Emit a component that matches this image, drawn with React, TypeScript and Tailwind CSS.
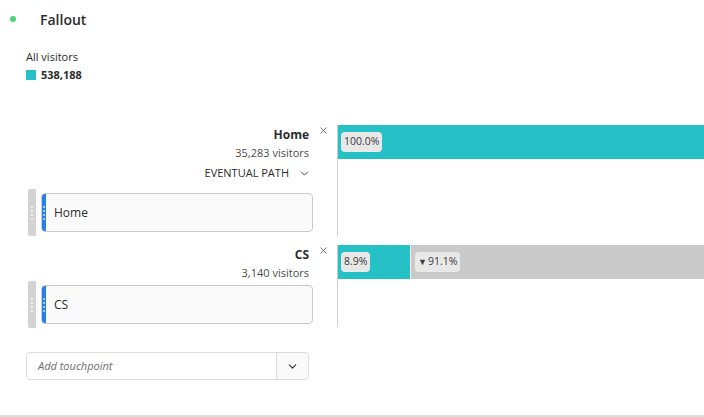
import { ChevronDown, X } from "lucide-react";

const font = { fontFamily: '"Open Sans", "Noto Sans", sans-serif' };

function Dots() {
  return (
    <div className="flex flex-col gap-[2px]">
      {[0, 1, 2, 3].map((i) => (
        <span key={i} className="block w-[2px] h-[2px] rounded-full bg-white/80" />
      ))}
    </div>
  );
}

function StepCard({ label }: { label: string }) {
  return (
    <div className="flex items-stretch">
      <div className="w-[8px] bg-[#d3d3d3] rounded-l-[2px] flex items-center justify-center -my-[4px]">
        <Dots />
      </div>
      <div className="ml-[5px] flex-1 flex h-[39px] rounded-[4px] border border-[#cacaca] bg-[#fafafa] overflow-hidden">
        <div className="w-[4px] bg-[#2680eb] flex items-center justify-center">
          <Dots />
        </div>
        <span className="pl-[8px] self-center text-[12px] text-[#2c2c2c]">{label}</span>
      </div>
    </div>
  );
}

function Badge({ children }: { children: React.ReactNode }) {
  return (
    <span className="inline-flex items-center h-[20px] px-[3px] rounded-[4px] bg-[#e8e8e8] text-[10.5px] text-[#3a3a3a]">
      {children}
    </span>
  );
}

function Labels({ name, visitors }: { name: string; visitors: string }) {
  return (
    <div className="flex">
      <div className="flex-1 text-right">
        <div className="text-[12px] font-bold text-[#2c2c2c] leading-[16px] mt-[2px]">{name}</div>
        <div className="text-[11px] text-[#4b4b4b] leading-[16px] mt-[2px]">{visitors}</div>
      </div>
      <div className="w-[28px] flex justify-center">
        <X size={11} strokeWidth={1.6} className="text-[#444]" />
      </div>
    </div>
  );
}

export default function App() {
  return (
    <div className="w-[704px] h-[417px] bg-white relative overflow-hidden" style={font}>
      <div className="flex items-center h-[38px]">
        <span className="ml-[10px] w-[6px] h-[6px] rounded-full bg-[#4ed27a]" />
        <span className="ml-[24px] text-[14px] font-semibold text-[#2c2c2c]">Fallout</span>
      </div>

      <div className="pl-[26px] mt-[11px]">
        <div className="text-[11px] text-[#2c2c2c] leading-[16px]">All visitors</div>
        <div className="flex items-center mt-[2px]">
          <span className="w-[10px] h-[10px] bg-[#26c0c7]" />
          <span className="ml-[5px] text-[11px] font-bold text-[#2c2c2c] leading-[16px]">538,188</span>
        </div>
      </div>

      {/* row 1 */}
      <div className="flex mt-[42px]">
        <div className="w-[337px] pl-[28px]">
          <Labels name="Home" visitors="35,283 visitors" />
          <div className="flex justify-end items-center pr-[26px] mt-[4px] text-[11px] text-[#2c2c2c] leading-[16px]">
            EVENTUAL PATH
            <ChevronDown size={13} strokeWidth={1.8} className="ml-[9px] text-[#444]" />
          </div>
          <div className="pr-[24px] mt-[12px]">
            <StepCard label="Home" />
          </div>
        </div>
        <div className="flex-1 border-l border-[#cfcfcf] h-[111px]">
          <div className="h-[34px] bg-[#26c0c7] flex items-center pl-[3px]">
            <Badge>100.0%</Badge>
          </div>
        </div>
      </div>

      {/* row 2 */}
      <div className="flex mt-[9px]">
        <div className="w-[337px] pl-[28px]">
          <Labels name="CS" visitors="3,140 visitors" />
          <div className="pr-[24px] mt-[4px]">
            <StepCard label="CS" />
          </div>
        </div>
        <div className="flex-1 border-l border-[#cfcfcf] h-[82px]">
          <div className="h-[34px] flex">
            <div className="w-[72px] bg-[#26c0c7] flex items-center pl-[3px]">
              <Badge>8.9%</Badge>
            </div>
            <div className="flex-1 ml-[1px] bg-[#cacaca] flex items-center pl-[4px]">
              <Badge>
                <span className="text-[9px] mr-[1px]">▼</span>91.1%
              </Badge>
            </div>
          </div>
        </div>
      </div>

      <div className="ml-[26px] mt-[25px] w-[283px] h-[28px] flex rounded-[4px] border border-[#dcdcdc] bg-white">
        <span className="flex-1 self-center pl-[11px] text-[11px] italic text-[#6e6e6e]">Add touchpoint</span>
        <div className="w-[32px] border-l border-[#dcdcdc] bg-[#fafafa] flex items-center justify-center rounded-r-[4px]">
          <ChevronDown size={13} strokeWidth={2.2} className="text-[#333]" />
        </div>
      </div>

      <div className="absolute left-0 right-0 bottom-0 h-[2px] bg-[#dedede]" />
    </div>
  );
}
